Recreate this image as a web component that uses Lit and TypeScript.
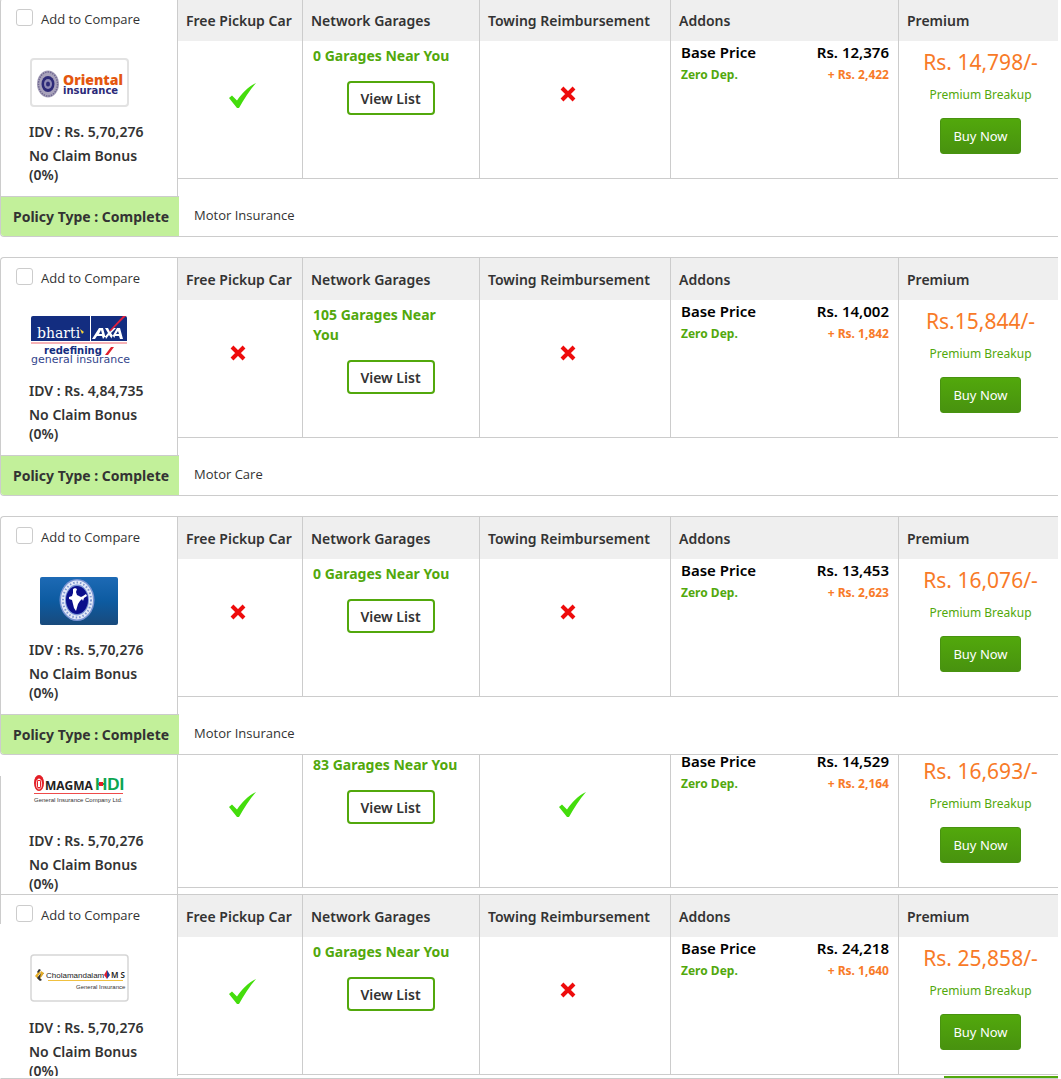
import { LitElement, html, svg, css, nothing } from "lit";
import { customElement, property } from "lit/decorators.js";
import { classMap } from "lit/directives/class-map.js";

type Variant = "full" | "continued" | "last";

interface Plan {
  id: string;
  insurer: string;
  idv: string;
  bonus: string;
  pickup: boolean;
  garages: number;
  towing: boolean;
  base: string;
  zeroDep: string;
  premium: string;
  product?: string;
  variant: Variant;
}

const PLANS: Plan[] = [
  { id: "oriental", insurer: "Oriental Insurance", idv: "5,70,276", bonus: "0%", pickup: true, garages: 0, towing: false, base: "12,376", zeroDep: "2,422", premium: "Rs. 14,798/-", product: "Motor Insurance", variant: "full" },
  { id: "bharti", insurer: "Bharti AXA", idv: "4,84,735", bonus: "0%", pickup: false, garages: 105, towing: false, base: "14,002", zeroDep: "1,842", premium: "Rs.15,844/-", product: "Motor Care", variant: "full" },
  { id: "newindia", insurer: "New India Assurance", idv: "5,70,276", bonus: "0%", pickup: false, garages: 0, towing: false, base: "13,453", zeroDep: "2,623", premium: "Rs. 16,076/-", product: "Motor Insurance", variant: "full" },
  { id: "magma", insurer: "Magma HDI", idv: "5,70,276", bonus: "0%", pickup: true, garages: 83, towing: true, base: "14,529", zeroDep: "2,164", premium: "Rs. 16,693/-", variant: "continued" },
  { id: "chola", insurer: "Cholamandalam MS", idv: "5,70,276", bonus: "0%", pickup: true, garages: 0, towing: false, base: "24,218", zeroDep: "1,640", premium: "Rs. 25,858/-", variant: "last" },
];

const LOGOS: Record<string, unknown> = {
  oriental: svg`
    <rect x="1" y="3" width="97" height="47" rx="3" fill="#fff" stroke="#e2e2e2" stroke-width="2"/>
    <ellipse cx="18" cy="28" rx="11" ry="13.5" fill="#a9a3bb"/>
    <ellipse cx="18" cy="28" rx="9.5" ry="12" fill="none" stroke="#6f6892" stroke-width="1.5" stroke-dasharray="1.5 1"/>
    <ellipse cx="18" cy="28" rx="6.5" ry="8" fill="#2d2a78"/>
    <ellipse cx="18" cy="28" rx="4" ry="5" fill="#8f8ab4"/>
    <ellipse cx="18" cy="28" rx="2" ry="2.5" fill="#2d2a78"/>
    <text x="33" y="29" font-family="Open Sans" font-weight="800" font-size="14" fill="#e4570f">Oriental</text>
    <text x="33" y="38" font-family="DejaVu Sans" font-weight="700" font-size="10" fill="#2b2a78">insurance</text>`,
  bharti: svg`
    <path d="M1 26V3q0-2 2-2H95q2 0 2 2V26Z" fill="#132d80"/>
    <path d="M60 1h1v25h-1z" fill="#fff"/>
    <text x="7" y="23" font-family="DejaVu Serif" font-weight="400" font-size="14" fill="#fff">bharti</text>
    <path d="m50 14 4 3-2 2z" fill="#f3d33b"/>
    <path d="M62 24 69 13h4l3 11h-3l-1-3h-5l-2 3ZM69 19h3l-1-4ZM75 13h3l2 4 3-4h3l-5 5 4 6h-3l-3-4-3 4h-3l5-6ZM81 24l6-11h3l3 11h-3l-1-3h-4l-1 3ZM86 19h3l-1-3Z" fill="#fff" fill-rule="evenodd"/>
    <path d="M93 1h3L81 16h-2Z" fill="#e01f3c"/>
    <path d="M1 27h96v2H1z" fill="#f6b2b6"/>
    <text x="14" y="39" font-family="DejaVu Sans" font-weight="700" font-size="10" fill="#132d80">redefining</text>
    <path d="M81 32h3l-6 8h-3Z" fill="#e01f2c"/>
    <text x="1" y="48" font-family="DejaVu Sans" font-weight="400" font-size="11" fill="#33458c">general insurance</text>`,
  newindia: svg`
    <defs><linearGradient id="sky" x1="0" y1="0" x2="0" y2="1"><stop offset="0" stop-color="#1d6ab5"/><stop offset=".5" stop-color="#0d5ba1"/><stop offset="1" stop-color="#194a7c"/></linearGradient></defs>
    <rect x="10" y="3" width="78" height="48" rx="2" fill="url(#sky)"/>
    <ellipse cx="47" cy="26" rx="17.5" ry="21" fill="#7b95d4"/>
    <ellipse cx="47" cy="26" rx="14" ry="17.5" fill="none" stroke="#e5eaf8" stroke-width="4"/>
    <ellipse cx="47" cy="26" rx="14" ry="17.5" fill="none" stroke="#8098d0" stroke-width="2" stroke-dasharray="1.5 2"/>
    <ellipse cx="47" cy="26" rx="11" ry="14" fill="#0b0f8c"/>
    <path d="m43 15 2-1 2 1-1 3 1 3 4 2 2-1 3-2 1 2-3 2-1 3-1-2-2 2-2 3-2 7-2-3-2-8-3-1 0-2 3-1 1-3Z" fill="#fff"/>`,
  magma: svg`
    <ellipse cx="9" cy="18" rx="5" ry="8" fill="#e31e26"/>
    <ellipse cx="9" cy="19" rx="2.6" ry="5" fill="none" stroke="#fff" stroke-width=".8"/>
    <path d="M8 16h2v6H8zM8 14h2v1H8z" fill="#fff"/>
    <text x="15" y="25" font-family="Open Sans" font-weight="700" font-size="12" fill="#222">MAGMA</text>
    <text x="65" y="25" font-family="Liberation Sans" font-weight="700" font-size="17" fill="#0ba552">HDI</text>
    <path d="M69 17h4v4h-4z" fill="#e31e26"/>
    <path d="M4 28h89v1H4z" fill="#ef4a4a"/>
    <text x="4" y="37" font-family="Liberation Sans" font-size="6" fill="#333">General Insurance Company Ltd.</text>`,
  chola: svg`
    <rect x="1" y="3" width="97" height="46" rx="3" fill="#fff" stroke="#d6d6d6" stroke-width="1.5"/>
    <path d="m5 24 4-5 2 1-3 4 1 4Z" fill="#e5ad27"/><path d="m9 17 2 1-3 3-1-1Z" fill="#333"/>
    <path d="m14 21-4 5 2 2-2 1-3-3 4-5Z" fill="#333"/><path d="m11 19 3 2-4 6Z" fill="#e5ad27"/>
    <text x="16" y="26" font-family="Liberation Sans" font-size="8" fill="#222">Cholamandalam</text>
    <path d="M77 18v9l-3-4Z" fill="#e01f2c"/><path d="M77 18v9l3-4Z" fill="#21409a"/>
    <text x="81" y="26" font-family="Noto Sans" font-weight="600" font-size="8" fill="#222">M S</text>
    <path d="M18 28h75v1H18z" fill="#f0c040"/>
    <text x="46" y="37" font-family="Liberation Sans" font-size="6" fill="#333">General Insurance</text>`,
};

@customElement("plan-mark")
class PlanMark extends LitElement {
  @property({ type: Boolean }) included = false;

  static styles = css`
    :host { display: block; }
    svg { display: block; }
  `;

  render() {
    return this.included
      ? html`<svg width="28" height="26" viewBox="0 0 28 26" role="img" aria-label="Included"><path d="M0 15 3 12.5 8 17.5C13 10 19 4 27 0 20 8 15 16 10 25L8 25Z" fill="#44dd0c"/></svg>`
      : html`<svg width="28" height="26" viewBox="0 0 28 26" role="img" aria-label="Not included"><path d="M3 5 15 17M15 5 3 17" stroke="#ee0c0c" stroke-width="4"/></svg>`;
  }
}

@customElement("plan-card")
class PlanCard extends LitElement {
  @property({ attribute: false }) plan!: Plan;

  static styles = css`
    :host { display: block; }
    * { box-sizing: border-box; }
    .card {
      display: grid;
      grid-template-columns: 177px minmax(0, 1fr);
      border: 1px solid #ccc;
      border-right: 0;
      border-radius: 4px 0 0 4px;
      background: #fff;
    }
    .card.continued, .card.last { border-color: transparent; border-radius: 0; }
    .card.continued { position: relative; border-top: 0; border-bottom: 0; }
    .card.continued::before {
      content: "";
      position: absolute;
      left: -1px;
      top: 21px;
      bottom: -30px;
      width: 1px;
      background: #ccc;
    }
    .card.last { border-top-color: #ccc; border-bottom-color: #ccc; }
    .side { display: flex; flex-direction: column; }
    .summary {
      flex: 1;
      padding: 10px 24px 12px 15px;
      border-right: 1px solid #ccc;
    }
    .continued .summary { padding-bottom: 1px; }
    .last .summary { flex: none; height: 181px; overflow: hidden; }
    .compare {
      display: flex;
      align-items: center;
      gap: 8px;
      height: 20px;
      margin-bottom: 27px;
      font: 400 13px "Open Sans", "Noto Sans", sans-serif;
      color: #333;
    }
    .tick {
      appearance: none;
      width: 17px;
      height: 17px;
      margin: 0 0 3px;
      border: 1px solid #ccc;
      border-radius: 3px;
      background: #fff;
    }
    .tick:checked { background: #52a80c; }
    .logo { display: block; margin-left: 14px; }
    .facts {
      margin: 14px 0 0 13px;
      font-size: 14px;
      font-weight: 600;
      line-height: 19px;
      color: #333;
    }
    .facts p { margin: 0 0 5px; }
    .facts p:last-child { margin: 0; }
    .policy {
      height: 40px;
      margin-right: -1px;
      padding-left: 12px;
      border-top: 1px solid #ccc;
      border-radius: 0 0 0 3px;
      background: #c2f09a;
      font-size: 14px;
      font-weight: 700;
      line-height: 40px;
      color: #333;
      white-space: nowrap;
    }
    .main { overflow: hidden; }
    .cover {
      width: 100%;
      table-layout: fixed;
      border-spacing: 0;
      border-bottom: 1px solid #ccc;
    }
    .continued .cover { margin-top: -5px; }
    .c-pickup { width: 125px; }
    .c-garages { width: 177px; }
    .c-towing { width: 191px; }
    .c-addons { width: 228px; }
    th {
      height: 42px;
      padding: 0 0 0 8px;
      background: #efefef;
      border-right: 1px solid #ccc;
      font-size: 14px;
      font-weight: 600;
      text-align: left;
      white-space: nowrap;
      color: #333;
    }
    td {
      height: 137px;
      padding: 0;
      border-right: 1px solid #ccc;
      vertical-align: top;
    }
    th:last-child, td:last-child { border-right: 0; }
    .pickup { padding: 42px 0 0 51px; }
    .towing { padding: 42px 0 0 79px; }
    .garages { padding: 5px 11px 0 10px; }
    .near {
      margin: 0 4px 15px 0;
      font-size: 14px;
      font-weight: 700;
      line-height: 20px;
      color: #52a80c;
    }
    .view {
      display: block;
      width: 88px;
      height: 34px;
      margin: 0 auto;
      padding: 0;
      border: 2px solid #52a80c;
      border-radius: 4px;
      background: #fff;
      font: 600 14px "Noto Sans", "Open Sans", sans-serif;
      color: #333;
    }
    .addons { padding: 1px 9px 0 10px; }
    .line {
      display: flex;
      justify-content: space-between;
      margin: 0 0 3px;
      font-size: 15px;
      font-weight: 600;
      line-height: 20px;
      color: #000;
    }
    .line.extra { font-size: 12px; font-weight: 700; color: #f87a27; }
    .line.extra .name { color: #52a80c; }
    .premium { padding: 6px 0 0 4px; text-align: center; }
    .total {
      margin: 0 0 8px;
      font-size: 21px;
      line-height: 30px;
      color: #f87a27;
    }
    .breakup {
      display: block;
      margin-bottom: 13px;
      font-size: 12px;
      line-height: 20px;
      color: #52a80c;
      text-decoration: none;
    }
    .buy {
      width: 81px;
      height: 36px;
      padding: 0;
      border: 1px solid #489310;
      border-radius: 3px;
      background: linear-gradient(#52a80c, #48920f);
      font: 400 13px "Noto Sans", "Open Sans", sans-serif;
      color: #fff;
    }
    .product {
      margin: 0;
      padding: 26px 16px 0;
      font: 400 13px/20px "Open Sans", "Noto Sans", sans-serif;
      color: #333;
    }
    .next { width: 114px; height: 2px; margin: 1px 0 0 auto; background: #52a80c; }
  `;

  render() {
    const p = this.plan;
    const headed = p.variant !== "continued";
    return html`
      <article class=${classMap({ card: true, [p.variant]: true })}>
        <div class="side">
          <div class="summary">
            ${headed
              ? html`<label class="compare" for="cmp"><input class="tick" id="cmp" type="checkbox" />Add to Compare</label>`
              : nothing}
            <svg class="logo" width="100" height="52" viewBox="0 0 100 52" role="img" aria-label=${p.insurer}>${LOGOS[p.id]}</svg>
            <div class="facts">
              <p>IDV : Rs. ${p.idv}</p>
              <p>No Claim Bonus (${p.bonus})</p>
            </div>
          </div>
          ${p.product ? html`<div class="policy">Policy Type : Complete</div>` : nothing}
        </div>
        <div class="main">
          <table class="cover">
            <colgroup>
              <col class="c-pickup" /><col class="c-garages" /><col class="c-towing" /><col class="c-addons" /><col />
            </colgroup>
            ${headed
              ? html`<thead><tr><th>Free Pickup Car</th><th>Network Garages</th><th>Towing Reimbursement</th><th>Addons</th><th>Premium</th></tr></thead>`
              : nothing}
            <tbody>
              <tr>
                <td class="pickup"><plan-mark ?included=${p.pickup}></plan-mark></td>
                <td class="garages">
                  <p class="near">${p.garages} Garages Near You</p>
                  <button class="view" type="button">View List</button>
                </td>
                <td class="towing"><plan-mark ?included=${p.towing}></plan-mark></td>
                <td class="addons">
                  <p class="line"><span>Base Price</span><span>Rs. ${p.base}</span></p>
                  <p class="line extra"><span class="name">Zero Dep.</span><span>+ Rs. ${p.zeroDep}</span></p>
                </td>
                <td class="premium">
                  <p class="total">${p.premium}</p>
                  <a class="breakup" href="#breakup">Premium Breakup</a>
                  <button class="buy" type="button">Buy Now</button>
                </td>
              </tr>
            </tbody>
          </table>
          ${p.product ? html`<p class="product">${p.product}</p>` : nothing}
          ${p.variant === "last" ? html`<div class="next"></div>` : nothing}
        </div>
      </article>
    `;
  }
}

@customElement("app-root")
class AppRoot extends LitElement {
  static styles = css`
    :host {
      display: block;
      overflow: hidden;
      background: #fff;
      font-family: "Noto Sans", "Open Sans", sans-serif;
    }
    .plans {
      display: flex;
      flex-direction: column;
      margin-top: -2px;
      padding-right: 3px;
    }
    .full + .full { margin-top: 20px; }
  `;

  render() {
    return html`<main class="plans">
      ${PLANS.map((plan) => html`<plan-card class=${plan.variant} .plan=${plan}></plan-card>`)}
    </main>`;
  }
}
